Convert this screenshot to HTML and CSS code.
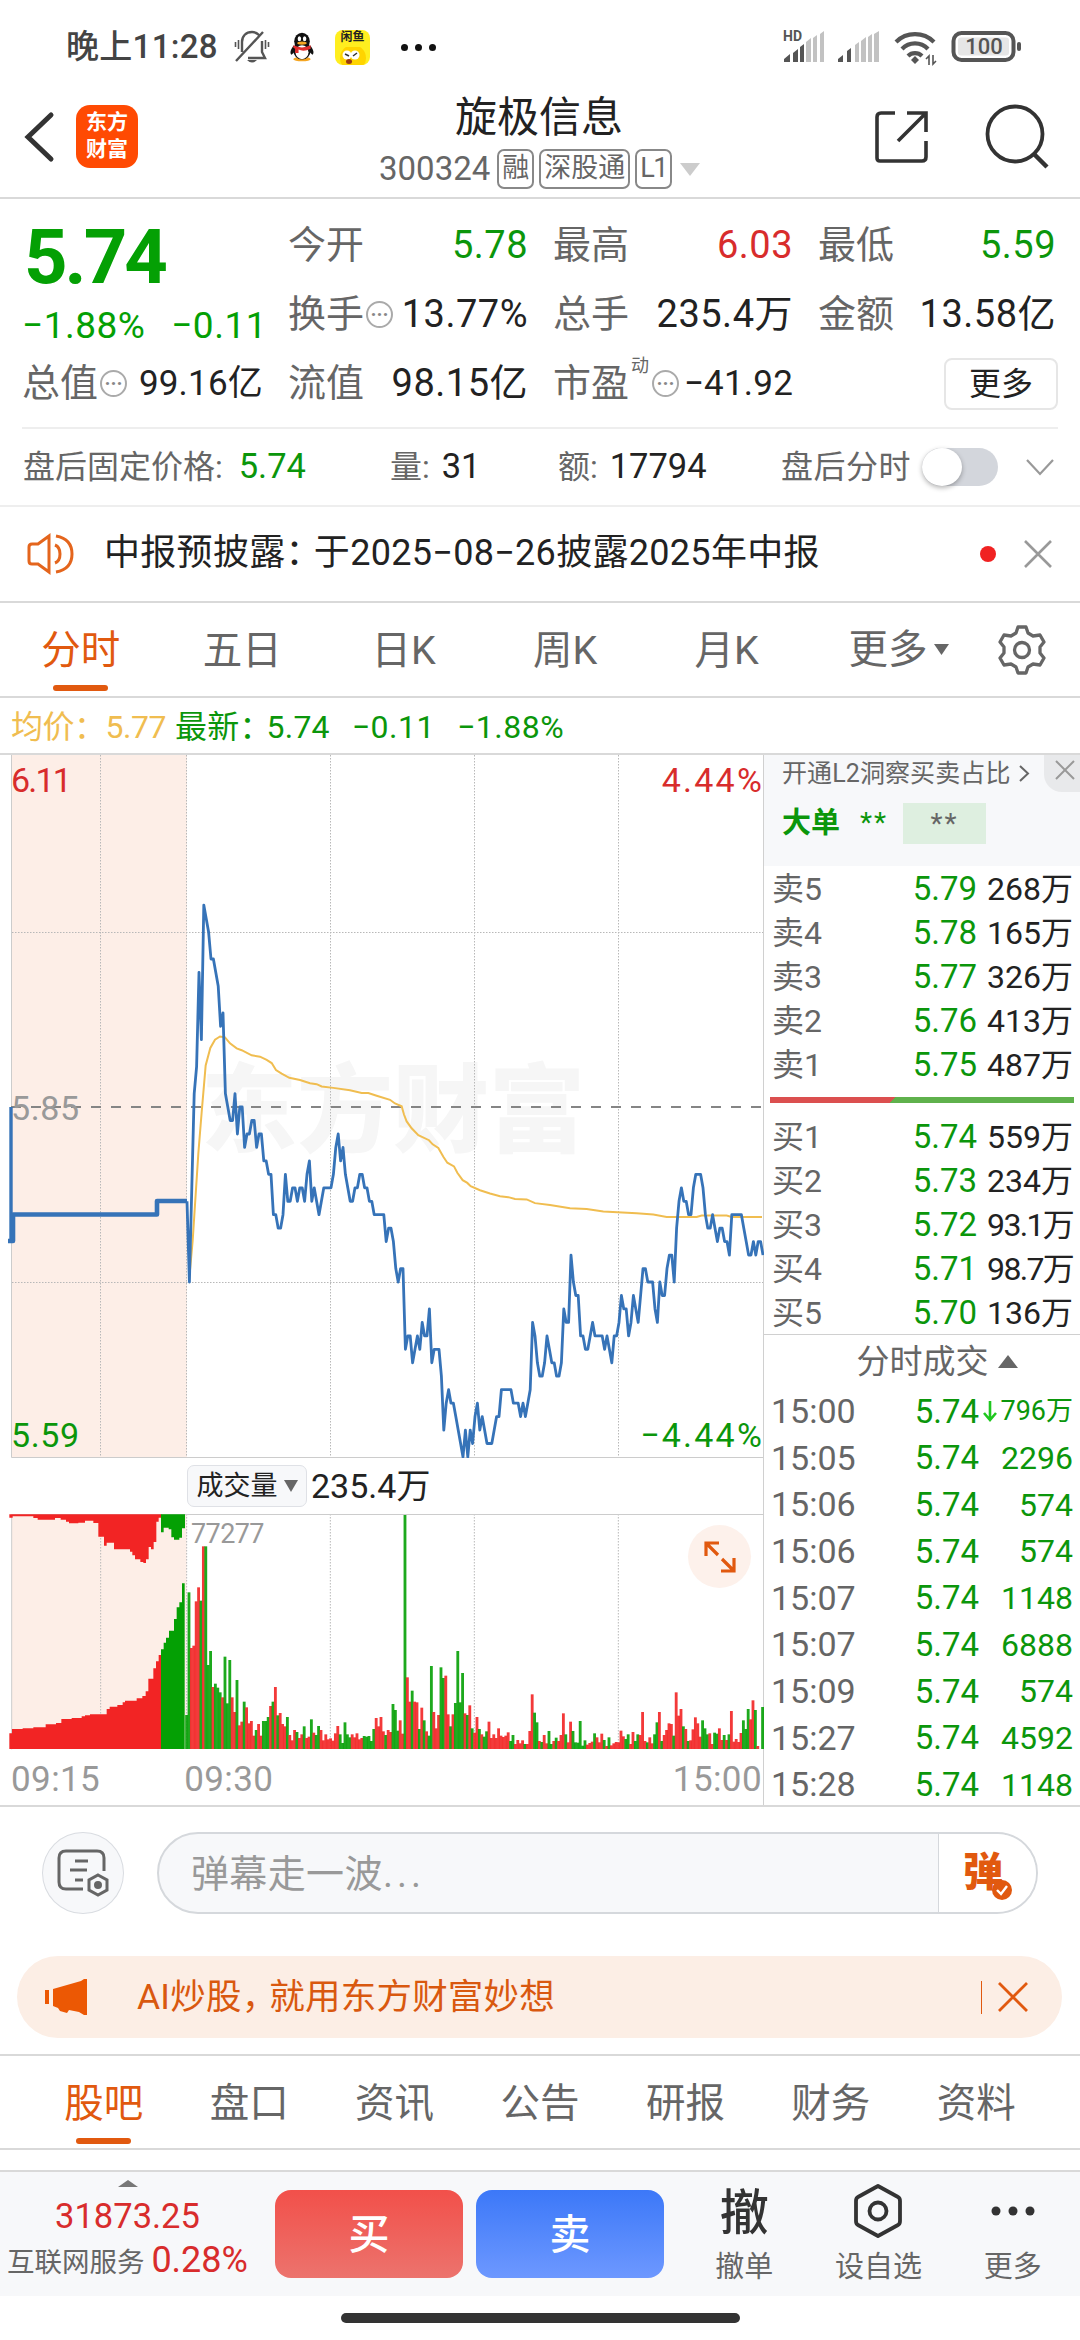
FILE: index.html
```html
<!DOCTYPE html>
<html lang="zh-CN">
<head>
    <meta charset="utf-8">
    <title>旋极信息 300324</title>
    <link rel="stylesheet" href="styles.css">
</head>
<body>
    <!-- Status bar -->
    <div class="status-bar">
        <span class="clock">晚上11:28</span>
        <svg class="bell" width="36" height="36" viewBox="0 0 36 36" fill="none" stroke="#555" stroke-width="2.400">
            <path d="M8 23V13C8 7 12 3 18 3q4 0 7 3M28 12v11l3 6H14M29 3L2 32"/>
            <path d="M13 31h10q-5 5-10 0z" fill="#555" stroke="none"/>
            <path d="M4.500 11v9M1.500 13v5M31.500 11v9M34.500 13v5" stroke-width="1.600"/>
        </svg>
        <svg class="qq" width="26" height="32" viewBox="0 0 30 34">
            <ellipse cx="15" cy="31" rx="10" ry="2.500" fill="#f5a623"/>
            <path d="M6 15C1 20 1 25 3 26l3-3zM24 15c5 5 5 10 3 11l-3-3z" fill="#111"/>
            <ellipse cx="15" cy="21" rx="10" ry="10.500" fill="#111"/>
            <ellipse cx="15" cy="10.500" rx="9" ry="10" fill="#111"/>
            <ellipse cx="15" cy="23" rx="7.500" ry="8" fill="#fff"/>
            <ellipse cx="12" cy="7.500" rx="2" ry="3" fill="#fff"/>
            <ellipse cx="18" cy="7.500" rx="2" ry="3" fill="#fff"/>
            <ellipse cx="15" cy="12.500" rx="5.500" ry="1.800" fill="#f5a623"/>
            <path d="M5 15q10 5 20 0v4q-8 4-14 1v4H7v-5l-2-1z" fill="#e02d2d"/>
        </svg>
        <span class="fish-app">
            <b>闲鱼</b>
            <svg width="34" height="18" viewBox="0 0 34 18">
                <circle cx="18" cy="11" r="13" fill="#ffd400"/>
                <circle cx="12" cy="8" r="4.500" fill="#fff"/>
                <circle cx="20" cy="8" r="4.500" fill="#fff"/>
                <path d="M10 7l4 2M22 6l-4 3" stroke="#333" stroke-width="1.500"/>
                <ellipse cx="14" cy="14.500" rx="3" ry="2.500" fill="#9b3b12"/>
            </svg>
        </span>
        <span class="dots"><i></i><i></i><i></i></span>
        <svg class="signals" width="240" height="40" viewBox="0 0 240 40">
            <g fill="#c2c2c2">
                <path d="M24 13l5-4v24h-5zM31 9l4-3v27h-4zM38 5l4-3v31h-4z"/>
                <path d="M73 16l4-3v20h-4zM79 12l5-4v25h-5zM86 8l4-3v28h-4zM92 5l5-3v31h-5z"/>
            </g>
            <g fill="#555">
                <path d="M2 33v-3l6-5v8zM11 24l5-4v13h-5zM18 18l4-3v18h-4z"/>
                <path d="M56 33v-3l5-4v7zM65 22l4-3v14h-4z"/>
                <path d="M133 27l4 4-4 4-4-4z"/>
            </g>
            <g fill="none" stroke="#555" stroke-width="4.200">
                <path d="M114 13a27 27 0 0 1 38 0M120 20a18 18 0 0 1 26 0M126 27a10 10 0 0 1 14 0"/>
                <path d="M144 30l3-3v9M154 32l-3 3v-9" stroke-width="1.600"/>
                <rect x="171.500" y="4" width="60" height="27" rx="8" stroke-width="4"/>
            </g>
            <rect x="176" y="8.500" width="51" height="18" rx="3" fill="#e6e6e6"/>
            <rect x="235" y="13" width="4" height="9" rx="2" fill="#555"/>
            <text x="1" y="12" class="hd">HD</text>
            <text x="202" y="25" class="battery" text-anchor="middle">100</text>
        </svg>
    </div>

    <!-- Title bar -->
    <div class="header">
        <svg class="back" width="34" height="54" viewBox="0 0 34 54" fill="none" stroke="#333" stroke-width="5" stroke-linecap="round"><path d="M28 5L5 27l23 22"/></svg>
        <div class="logo"><div>东方</div><div>财富</div></div>
        <div class="title">
            <h1>旋极信息</h1>
            <div class="code">
                <span>300324</span>
                <span class="tag">融</span><span class="tag">深股通</span><span class="tag">L1</span>
                <svg width="20" height="13" viewBox="0 0 20 13"><path d="M0 0h20L10 13z" fill="#ccc"/></svg>
            </div>
        </div>
        <svg class="share" width="56" height="56" viewBox="0 0 56 56" fill="none" stroke="#333" stroke-width="3.600">
            <path d="M21 4H7q-4 0-4 4v41q0 3 3 3h42q4 0 4-4V32M33 4h19v19M51 5L24 32"/>
        </svg>
        <svg class="search" width="66" height="66" viewBox="0 0 66 66" fill="none" stroke="#333" stroke-width="3.800">
            <circle cx="30" cy="30" r="27.500"/><path d="M48 49l14 14" stroke-width="4.500"/>
        </svg>
    </div>

    <!-- Quote -->
    <div class="quote">
        <div class="price-box">
            <div class="price">5.74</div>
            <div class="change"><span>−1.88%</span><span>−0.11</span></div>
        </div>
        <div class="cell"><span>今开</span><b class="green">5.78</b></div>
        <div class="cell"><span>最高</span><b class="red">6.03</b></div>
        <div class="cell"><span>最低</span><b class="green">5.59</b></div>
        <div class="cell"><span>换手<i class="info">···</i></span><b>13.77%</b></div>
        <div class="cell"><span>总手</span><b>235.4万</b></div>
        <div class="cell"><span>金额</span><b>13.58亿</b></div>
        <div class="cell"><span>总值<i class="info">···</i></span><b class="small">99.16亿</b></div>
        <div class="cell"><span>流值</span><b>98.15亿</b></div>
        <div class="cell"><span>市盈<sup>动</sup><i class="info">···</i></span><b class="small">−41.92</b></div>
        <div class="cell"><button class="more-button">更多</button></div>
    </div>

    <div class="after-hours">
        <span class="fixed">盘后固定价格: <b class="green">5.74</b></span>
        <span class="amount">量: <b>31</b></span>
        <span class="money">额: <b>17794</b></span>
        <span class="minute">盘后分时</span>
        <span class="switch"></span>
        <svg width="28" height="17" viewBox="0 0 28 17" fill="none" stroke="#999" stroke-width="2.200"><path d="M1 1l13 14L27 1"/></svg>
    </div>

    <!-- Notice -->
    <div class="notice">
        <svg width="48" height="42" viewBox="0 0 48 42" fill="none" stroke="#e4651d" stroke-width="3">
            <path d="M22 3v36l-11-8H5q-3 0-3-3V14q0-3 3-3h6zM28 12q5 2 5 9t-5 9M29 3q16 3 16 18T29 39"/>
        </svg>
        <span>中报预披露<i class="mark">：</i>于2025−08−26披露2025年中报</span>
        <i class="red-dot"></i>
        <svg width="28" height="28" viewBox="0 0 28 28" stroke="#999" stroke-width="2.600"><path d="M1 1l26 26M27 1L1 27"/></svg>
    </div>

    <!-- Period tabs -->
    <div class="tabs period-tabs">
        <span class="active">分时</span><span>五日</span><span>日K</span><span>周K</span><span>月K</span>
        <span class="more-tab">更多<svg width="15" height="11" viewBox="0 0 15 11"><path d="M0 0h15L7.500 11z" fill="#666"/></svg></span>
        <svg class="gear" width="50" height="50" viewBox="0 0 50 50" fill="none" stroke="#666" stroke-width="3.300" stroke-linejoin="round">
            <path d="M21 2h8l2 6 5 3 7-1 4 7-4 5v6l4 5-4 7-7-1-5 3-2 6h-8l-2-6-5-3-7 1-4-7 4-5v-6l-4-5 4-7 7 1 5-3z"/>
            <circle cx="25" cy="25" r="7.500"/>
        </svg>
    </div>

    <div class="legend">
        <span class="avg">均价：5.77</span><span class="last">最新<i class="mark">：</i>5.74</span><span>−0.11</span><span>−1.88%</span>
    </div>

    <!-- Chart and order book -->
    <div class="market">
        <div class="charts">
            <div class="price-chart">
                <svg width="764" height="703" viewBox="0 0 764 703" fill="none">
                    <rect x="12" y="0" width="175" height="702" fill="#fdeee7"/>
                    <text class="watermark" x="201" y="389">东方财富</text>
                    <path d="M100.500 0v702M186.500 0v702M330.500 0v702M474.500 0v702M618.500 0v702M12 177.500h751M12 527.500h751" stroke="#b8b8b8" stroke-dasharray="1.500 1.500"/>
                    <path d="M11.500 0v702.500H763" stroke="#ccc"/>
                    <path d="M11 352h752" stroke="#858585" stroke-width="2" stroke-dasharray="10 10"/>
                    <polyline transform="scale(.33333 .45914) translate(0 -12)" vector-effect="non-scaling-stroke" stroke="#f0bd50" stroke-width="2"
                        points="567,1158 578,1070 595,880 605,790 617,688 631,650 645,632 660,625 675,627 690,640 710,651 725,655 755,666 780,669 800,676 815,683 828,698 845,706 868,715 900,720 930,727 950,729 965,734 1000,737 1050,742 1085,748 1105,748 1130,754 1170,763 1185,771 1205,777 1212,795 1220,810 1235,825 1255,840 1287,851 1298,860 1315,868 1330,887 1342,900 1362,908 1372,922 1388,938 1402,944 1412,951 1440,960 1470,967 1500,973 1525,975 1545,979 1580,980 1605,988 1650,992 1710,999 1760,1001 1810,1006 1910,1010 1960,1013 2000,1018 2090,1018 2105,1015 2180,1015 2195,1018 2286,1018"/>
                    <path d="M11 352v134" stroke="#3673b8" stroke-width="3.400"/>
                    <path d="M8 486h5v-26.500h144V446h30" stroke="#3673b8" stroke-width="4.600" stroke-linejoin="round"/>
                    <polyline id="price_line" stroke="#3673b8" stroke-width="2.800" stroke-linejoin="round"/>
                </svg>
                <span class="axis top-left red">6.11</span>
                <span class="axis top-right red">4.44%</span>
                <span class="axis middle">5.85</span>
                <span class="axis bottom-left green">5.59</span>
                <span class="axis bottom-right green">−4.44%</span>
            </div>
            <div class="volume-title">
                <span class="picker">成交量<svg width="14" height="12" viewBox="0 0 14 12"><path d="M0 0h14L7 12z" fill="#666"/></svg></span>
                <span>235.4万</span>
            </div>
            <div class="volume-chart">
                <!-- three units per pixel -->
                <svg width="764" height="236" viewBox="0 192 2292 708">
                    <rect x="36" y="192" width="524" height="705" fill="#fdeee7"/>
                    <path d="M302 192v705M560 192v705M991 192v705M1423 192v705M1855 192v705" stroke="#b8b8b8" stroke-width="3" stroke-dasharray="4.500 4.500"/>
                    <path d="M35 193.500H2290M35 193v705" stroke="#ccc" stroke-width="3" fill="none"/>
                    <path fill="#f22424" d="M28 897V850H36V837H68V835H100V832H137V823H168V819H184V807H215V804H245V799H255V796H270V793H320V777H329V770H352V765H368V757H375V752H410V745H427V738H437V724H445V686H460V655H468V634H476V615H484V897z"/>
                    <path fill="#04a004" d="M483 897V598H491V578H498V563H507V542H522V507H530V472H538V457H546V400H554V897z"/>
                    <path fill="#f22424" d="M28 193V203H38V199H100V204H113V209H165V204H182V209H198V215H207V220H235V218H255V212H280V219H295V260H312V287H320V278H342V298H390V305H397V316H405V328H421V336H430V339H438V328H446V291H453V298H461V276H469V215H476V203H484V193z"/>
                    <path fill="#04a004" d="M483 193V247H491V233H506V238H514V262H522V269H538V263H546V235H555V193z"/>
                    <g id="volume_bars"></g>
                </svg>
                <span class="max-volume">77277</span>
                <span class="expand">
                    <svg width="32" height="32" viewBox="0 0 32 32" fill="none" stroke="#e1590f" stroke-width="3.200"><path d="M2 15V2h13M2 2l12 12M30 17v13H17M30 30L18 18"/></svg>
                </span>
            </div>
            <div class="times"><span>09:15</span><span>09:30</span><span>15:00</span></div>
        </div>

        <div class="book">
            <div class="level2">
                <div class="level2-title">开通L2洞察买卖占比<svg width="11" height="17" viewBox="0 0 11 17" fill="none" stroke="#666" stroke-width="2"><path d="M1 1l8 7.500L1 16"/></svg></div>
                <div class="big-order"><b>大单</b><span>**</span><em>**</em></div>
                <span class="level2-close"><svg width="20" height="20" viewBox="0 0 20 20" stroke="#999" stroke-width="2"><path d="M1 1l18 18M19 1L1 19"/></svg></span>
            </div>
            <div class="orders">
                <div><span>卖5</span><b>5.79</b><em>268万</em></div>
                <div><span>卖4</span><b>5.78</b><em>165万</em></div>
                <div><span>卖3</span><b>5.77</b><em>326万</em></div>
                <div><span>卖2</span><b>5.76</b><em>413万</em></div>
                <div><span>卖1</span><b>5.75</b><em>487万</em></div>
            </div>
            <div class="ratio"></div>
            <div class="orders">
                <div><span>买1</span><b>5.74</b><em>559万</em></div>
                <div><span>买2</span><b>5.73</b><em>234万</em></div>
                <div><span>买3</span><b>5.72</b><em class="narrow">93.1万</em></div>
                <div><span>买4</span><b>5.71</b><em class="narrow">98.7万</em></div>
                <div><span>买5</span><b>5.70</b><em>136万</em></div>
            </div>
            <div class="deals-title">分时成交<svg width="20" height="13" viewBox="0 0 20 13"><path d="M10 0l10 13H0z" fill="#666"/></svg></div>
            <div class="deals">
                <div><span>15:00</span><b>5.74</b><svg width="14" height="22" viewBox="0 0 14 22" fill="none" stroke="#1fc71f" stroke-width="2.600"><path d="M7 1v18M1 13l6 7 6-7"/></svg><em class="wan">796万</em></div>
                <div><span>15:05</span><b>5.74</b><em>2296</em></div>
                <div><span>15:06</span><b>5.74</b><em>574</em></div>
                <div><span>15:06</span><b>5.74</b><em>574</em></div>
                <div><span>15:07</span><b>5.74</b><em>1148</em></div>
                <div><span>15:07</span><b>5.74</b><em>6888</em></div>
                <div><span>15:09</span><b>5.74</b><em>574</em></div>
                <div><span>15:27</span><b>5.74</b><em>4592</em></div>
                <div><span>15:28</span><b>5.74</b><em>1148</em></div>
            </div>
        </div>
    </div>

    <!-- Comment input -->
    <div class="comment">
        <span class="comment-settings">
            <svg width="52" height="50" viewBox="0 0 52 50" fill="none" stroke="#666" stroke-width="3">
                <path d="M26 41H9q-7 0-7-7V10q0-7 7-7h31q7 0 7 7v13M18 13h13M13 22h17M18 32h8"/>
                <path d="M41 27l9 5v10l-9 5-9-5V32z"/><circle cx="41" cy="37" r="2.500" fill="#666"/>
            </svg>
        </span>
        <div class="comment-box">
            <span class="placeholder">弹幕走一波<i>...</i></span>
            <span class="barrage">弹<svg width="20" height="20" viewBox="0 0 20 20" fill="none"><circle cx="10" cy="10" r="10" fill="#e1590f"/><path d="M5 10l4 4 6-8" stroke="#fff" stroke-width="2.400"/></svg></span>
        </div>
    </div>

    <!-- Promo -->
    <div class="promo">
        <svg width="42" height="38" viewBox="0 0 42 38" fill="#ec5804"><path d="M0 12h4v14H0zM8 11L36 3l3-2h3v36h-3l-5-3-10-2-2 3-7-2-2-3-5-2z"/></svg>
        <span>AI炒股<i class="mark">，</i>就用东方财富妙想</span>
        <i class="line"></i>
        <svg width="30" height="30" viewBox="0 0 30 30" stroke="#e1590f" stroke-width="2.800"><path d="M1 1l28 28M29 1L1 29"/></svg>
    </div>

    <!-- Content tabs -->
    <div class="tabs content-tabs">
        <span class="active">股吧</span><span>盘口</span><span>资讯</span><span>公告</span><span>研报</span><span>财务</span><span>资料</span>
    </div>

    <!-- Bottom bar -->
    <div class="bottom-bar">
        <div class="index">
            <svg width="20" height="7" viewBox="0 0 20 7"><path d="M10 0l10 7H0z" fill="#777"/></svg>
            <div class="index-value">31873.25</div>
            <div class="index-name">互联网服务 <b>0.28%</b></div>
        </div>
        <button class="trade buy">买</button>
        <button class="trade sell">卖</button>
        <div class="action"><div class="action-icon text-icon">撤</div><span>撤单</span></div>
        <div class="action"><div class="action-icon"><svg width="50" height="54" viewBox="0 0 50 54" fill="none" stroke="#333" stroke-width="3.800" stroke-linejoin="round"><path d="M25 2l20 11q2 1 2 4v20q0 3-2 4L25 52 5 41q-2-1-2-4V17q0-3 2-4z"/><circle cx="25" cy="27" r="8.500"/></svg></div><span>设自选</span></div>
        <div class="action"><div class="action-icon"><svg width="44" height="10" viewBox="0 0 44 10" fill="#333"><circle cx="5" cy="5" r="4.500"/><circle cx="22" cy="5" r="4.500"/><circle cx="39" cy="5" r="4.500"/></svg></div><span>更多</span></div>
    </div>
    <div class="home-bar"></div>

    <script>
        // Minute prices from 09:30, in cents above 5.59
        var prices = [
            19,13,20,27,29,36,31,41,40,39,37,37,36,35,32,33,27,26,25,25,27,24,26,26,23,24,24,25,25,23,
            24,24,22,22,21,21,18,18,17,17,18,21,19,19,20,20,19,20,20,19,21,22,19,20,19,18,19,20,20,20,
            20,21,23,24,22,23,21,20,19,19,20,20,21,21,20,20,19,19,18,18,18,18,18,16,17,17,16,14,13,14,
            14,8,9,9,7,8,9,8,10,9,9,11,7,8,8,8,6,2,4,5,4,4,3,2,1,0,2,0,2,1,
            3,4,2,3,2,1,1,1,2,3,3,5,5,5,5,5,4,4,4,3,4,3,4,5,10,9,7,6,6,7,
            9,8,7,7,6,6,7,11,10,10,15,13,12,12,9,9,8,8,9,10,9,9,9,9,8,9,8,7,9,9,
            10,12,11,11,9,10,12,11,10,12,14,14,13,13,13,11,10,13,12,12,14,15,15,13,17,19,20,19,19,18,
            18,20,21,21,21,20,18,17,17,18,17,16,17,17,16,16,15,18,18,18,18,18,17,16,15,15,16,15,16,16,15
        ];

        // Minute volume heights, r = up, g = down
        var volumes = "102g 470g 303r 310r 443r 485r 445g 608r 608g 252g 294g 186r 196g 184g 170g 155r 277g 137g 267g 155r 111r 207g 71r 82r 142g 125r 77r 84r 40r 57g " +
            "75r 40r 84g 84g 96g 129r 142g 186r 101g 108r 75r 68r 96g 42r 26r 57r 51g 33r 44r 68g 33r 37r 89g 49r 42g 69g 57r 26r 44r 29r " +
            "32r 25r 47r 69r 44g 18g 80g 44g 35g 44r 35r 47r 29r 33r 39g 37g 39g 24g 60g 93r 68r 96r 53r 42g 57r 51r 135g 117g 55g 86r " +
            "46r 702g 215r 142r 175g 142r 140r 60g 124r 86g 53r 40g 249g 111r 62r 102r 245g 213g 220r 104r 68g 104r 138g 294g 140g 228g 107r 102g 131r 62g " +
            "49r 96r 60g 44r 37g 53g 82r 33r 44r 33r 62r 40r 36r 40r 50r 24g 42g 15r 27r 17r 26r 15g 15r 54r 164r 109g 80g 24r 21g 42r " +
            "17r 54g 15g 24r 34g 24r 42r 107r 44g 20r 82r 54g 20g 19g 84g 10g 26g 13r 18r 22r 47g 35r 20r 46r 27g 9r 35g 11r 17r 21r " +
            "20r 55r 38r 30g 44g 15r 51r 24g 44g 42r 111r 24r 20g 35r 17r 44g 80g 111r 24g 42r 57r 77r 75r 40g 170r 100r 120r 68g 60r 24g " +
            "26r 59r 95r 77r 37r 86g 62g 44g 47r 15r 49g 46g 62r 27r 42g 27r 44g 114r 22r 30r 21r 48r 86g 60g 120g 89r 146r 117g 9r 0r 126g";

        var points = prices.map(function(p, i) {
            return (187 + i * 2.4).toFixed(1) + "," + (702 - p * 13.46).toFixed(1);
        });
        document.getElementById("price_line").setAttribute("points", points.join(" "));

        var bars = "";
        volumes.split(" ").forEach(function(v, i) {
            var h = parseInt(v);
            var color = v.slice(-1) === "r" ? "#f22424" : "#04a004";
            bars += '<rect x="' + (555.5 + i * 7.2).toFixed(1) + '" y="' + (897 - h) + '" width="8.500" height="' + h + '" fill="' + color + '" fill-opacity=".9"/>';
        });
        document.getElementById("volume_bars").innerHTML = bars;
    </script>
</body>
</html>
```

FILE: styles.css
```css
* {
    box-sizing: border-box;
}

body {
    margin: 0;
    width: 1080px;
    height: 2340px;
    overflow: hidden;
    background-color: #fff;
    color: #222;
    font-family: Roboto, "Noto Sans CJK SC", sans-serif;
    font-size: 32px;
    line-height: 1.2;
    white-space: nowrap;
}

b, em, i {
    font-weight: normal;
    font-style: normal;
}

svg {
    display: block;
    flex: none;
}

button {
    font-family: inherit;
    padding: 0;
}

.green {
    color: #0b960b;
}

.red {
    color: #d82c2c;
}

/* Full-width punctuation set a little tighter */
.mark {
    margin-right: -8px;
}

/* Status bar */
.status-bar {
    height: 92px;
    padding: 2px 58px 0 66px;
    display: flex;
    align-items: center;
}

.clock {
    width: 168px;
    font-size: 33px;
    font-weight: 500;
    letter-spacing: 0.3px;
    color: #444;
}

.qq {
    margin-left: 19px;
}

.fish-app {
    margin-left: 20px;
    width: 35px;
    height: 35px;
    border-radius: 8px;
    background-color: #ffee1f;
    overflow: hidden;
}

.fish-app b {
    display: block;
    height: 17px;
    font-size: 12px;
    font-weight: 700;
    text-align: center;
}

.dots {
    display: flex;
    gap: 7px;
    margin-left: 31px;
}

.dots i {
    width: 7px;
    height: 7px;
    border-radius: 50%;
    background-color: #111;
}

.signals {
    margin-left: auto;
    margin-top: 3px;
}

.hd {
    font-size: 14px;
    font-weight: 700;
    fill: #555;
}

.battery {
    font-size: 22px;
    font-weight: 500;
    fill: #555;
}

/* Title bar */
.header {
    height: 107px;
    padding: 0 28px 16px 23px;
    display: flex;
    align-items: center;
    border-bottom: 2px solid #d9d9d9;
}

.logo {
    width: 62px;
    height: 63px;
    margin-left: 19px;
    border-radius: 14px;
    background-color: #ff4a03;
    color: #fff;
    font-size: 21px;
    font-weight: 700;
    line-height: 27px;
    padding-top: 4px;
    text-align: center;
}

.title {
    width: 320px;
    margin-left: 241px;
    padding-top: 8px;
}

.title h1 {
    margin: 0;
    font-size: 42px;
    font-weight: 400;
    text-align: center;
    line-height: 52px;
}

.code {
    display: flex;
    align-items: center;
    gap: 5px;
    margin-top: 5px;
    color: #666;
    font-size: 33px;
}

.code svg {
    margin-left: 3px;
}

.code span:first-child {
    margin-right: 2px;
}

.tag {
    height: 40px;
    padding: 0 3px;
    border: 2px solid #888;
    border-radius: 7px;
    font-size: 27px;
    line-height: 35px;
}

.tag:nth-of-type(4) {
    letter-spacing: -1.5px;
}

.share {
    margin-left: 175px;
}

.search {
    margin-left: 55px;
}

/* Quote */
.quote {
    height: 230px;
    margin: 0 22px;
    padding: 12px 0;
    display: grid;
    grid-template-columns: 241px 240px 240px 238px;
    grid-template-rows: 69px 69px 69px;
    column-gap: 25px;
    border-bottom: 2px solid #eee;
}

.price-box {
    grid-row: span 2;
    color: #04a004;
}

.price {
    height: 90px;
    padding-left: 2px;
    font-size: 76px;
    font-weight: 700;
    line-height: 92px;
    letter-spacing: -3px;
}

.change {
    display: flex;
    justify-content: space-between;
    margin-right: -4px;
    font-size: 37px;
    line-height: 50px;
    letter-spacing: 0.5px;
}

.cell {
    display: flex;
    align-items: center;
    justify-content: space-between;
    font-size: 38px;
}

.cell > span {
    display: flex;
    align-items: center;
    color: #666;
}

.cell > b {
    letter-spacing: 0.5px;
}

.cell .small {
    font-size: 35px;
    letter-spacing: 0.2px;
}

.cell sup {
    align-self: flex-start;
    font-size: 18px;
    line-height: 18px;
    margin: -4px 2px 0;
}

.info {
    width: 27px;
    height: 27px;
    margin-left: 2px;
    border: 2px solid #aaa;
    border-radius: 50%;
    color: #888;
    font-size: 20px;
    font-weight: 700;
    line-height: 23px;
    text-align: center;
}

sup + .info {
    margin-left: 1px;
}

.more-button {
    width: 114px;
    height: 52px;
    margin-left: auto;
    margin-right: -2px;
    border: 2px solid #e6e6e6;
    border-radius: 8px;
    background-color: #fff;
    color: #222;
    font-size: 32px;
    line-height: 46px;
}

/* After hours trading */
.after-hours {
    height: 78px;
    padding-left: 23px;
    display: flex;
    align-items: center;
    color: #666;
    font-size: 32px;
    border-bottom: 2px solid #eee;
}

.after-hours b {
    font-size: 34.5px;
    margin-left: 4px;
}

.after-hours b:not(.green) {
    color: #222;
}

.after-hours .green {
    margin-left: 8px;
}

.fixed {
    width: 367px;
}

.amount {
    width: 168px;
}

.money {
    width: 223px;
}

.minute {
    width: 141px;
    letter-spacing: 0.5px;
}

.switch {
    width: 76px;
    height: 38px;
    margin-right: 28px;
    border-radius: 19px;
    background-color: #d3d6dc;
}

.switch::before {
    content: "";
    display: block;
    width: 40px;
    height: 38px;
    border-radius: 50%;
    background-color: #fff;
    box-shadow: 0 2px 5px rgba(0, 0, 0, 0.3);
}

/* Notice */
.notice {
    height: 96px;
    padding: 0 28px 0 27px;
    display: flex;
    align-items: center;
    font-size: 36px;
    border-bottom: 2px solid #d9d9d9;
}

.notice span {
    margin-left: 29px;
    letter-spacing: 0.3px;
}

.red-dot {
    width: 16px;
    height: 16px;
    margin-left: auto;
    margin-right: 28px;
    border-radius: 50%;
    background-color: #f02222;
}

/* Tabs */
.tabs {
    display: flex;
    height: 95px;
    color: #666;
    font-size: 39.5px;
    border-bottom: 2px solid #d9d9d9;
}

.tabs span {
    flex: 1;
    display: flex;
    flex-direction: column;
    align-items: center;
    line-height: 96px;
}

.tabs .active {
    color: #e1590f;
}

.tabs .active::after {
    content: "";
    width: 55px;
    height: 6px;
    margin-top: -14px;
    border-radius: 3px;
    background-color: #e1590f;
}

.period-tabs span {
    flex: none;
    width: 161.5px;
}

.period-tabs .more-tab {
    flex-direction: row;
    justify-content: center;
    gap: 6px;
    width: 160px;
    padding-left: 22px;
}

.gear {
    align-self: center;
    margin-left: 29px;
}

.content-tabs {
    padding: 0 31px;
    height: 96px;
    border-top: 2px solid #d9d9d9;
}

/* Chart legend */
.legend {
    height: 57px;
    padding: 4px 0 0 11px;
    display: flex;
    align-items: center;
    gap: 22px;
    color: #0b960b;
    font-size: 32px;
    letter-spacing: 0.5px;
    border-bottom: 2px solid #d9d9d9;
}

.legend .avg {
    width: 142px;
    color: #f0bd50;
    letter-spacing: -0.5px;
}

.legend .last {
    letter-spacing: 0.2px;
}

.legend .mark {
    margin-right: -5px;
}

/* Charts */
.market {
    display: flex;
    height: 1052px;
    border-bottom: 2px solid #d9d9d9;
}

.charts {
    width: 764px;
    border-right: 1px solid #d0d0d0;
}

.price-chart, .volume-chart {
    position: relative;
}

.watermark {
    font-size: 96px;
    font-weight: 900;
    fill: #f6f6f6;
}

.axis {
    position: absolute;
    font-size: 34px;
    line-height: 40px;
}

.top-left {
    top: 5px;
    left: 11px;
    letter-spacing: -1.8px;
}

.top-right {
    top: 5px;
    right: -1px;
    letter-spacing: 2.2px;
}

.middle {
    top: 333px;
    left: 11px;
    color: #999;
    letter-spacing: 0.6px;
}

.bottom-left {
    bottom: 3px;
    left: 11px;
    letter-spacing: 0.6px;
}

.bottom-right {
    bottom: 3px;
    right: -1px;
    letter-spacing: 2.2px;
}

.volume-title {
    height: 56px;
    padding-left: 187px;
    display: flex;
    align-items: center;
    gap: 4px;
    font-size: 34px;
}

.picker {
    width: 120px;
    height: 42px;
    display: flex;
    align-items: center;
    justify-content: center;
    gap: 6px;
    border: 1px solid #dfe1e6;
    border-radius: 7px;
    background-color: #f7f8fa;
    font-size: 27px;
}

.max-volume {
    position: absolute;
    top: 4px;
    left: 191px;
    color: #999;
    font-size: 27px;
    letter-spacing: -0.6px;
}

.expand {
    position: absolute;
    top: 11px;
    right: 12px;
    width: 63px;
    height: 63px;
    display: flex;
    align-items: center;
    justify-content: center;
    border-radius: 50%;
    background-color: #fdf1eb;
}

.times {
    display: flex;
    height: 56px;
    padding: 9px 1px 0 11px;
    color: #999;
    font-size: 35px;
    letter-spacing: 0.4px;
}

.times span:nth-child(2) {
    margin-left: 84px;
}

.times span:last-child {
    margin-left: auto;
}

/* Order book */
.book {
    width: 316px;
}

.level2 {
    position: relative;
    height: 111px;
    padding-left: 18px;
    background-color: #f7f8fa;
    color: #666;
}

.level2-title {
    display: flex;
    align-items: center;
    gap: 8px;
    height: 37px;
    font-size: 25px;
    letter-spacing: 0.1px;
}

.level2-close {
    position: absolute;
    top: 0;
    right: 0;
    width: 36px;
    height: 37px;
    padding: 5px 5px 0 11px;
    border-bottom-left-radius: 18px;
    background-color: #e8e9eb;
}

.big-order {
    display: flex;
    align-items: center;
    height: 62px;
    font-size: 28px;
}

.big-order b {
    width: 78px;
    color: #0b960b;
    font-size: 29px;
    font-weight: 700;
}

.big-order span {
    width: 43px;
    color: #0b960b;
    letter-spacing: 2px;
}

.big-order em {
    width: 83px;
    height: 41px;
    background-color: #deefe0;
    text-align: center;
    line-height: 41px;
    letter-spacing: 2px;
}

.orders {
    padding: 1px 7px 0 8px;
    color: #666;
}

.orders div, .deals div {
    display: flex;
    align-items: center;
    height: 44px;
}

.orders span {
    width: 70px;
}

.orders b {
    width: 135px;
    color: #0b960b;
    font-size: 33px;
    text-align: right;
}

.orders em {
    flex: 1;
    color: #222;
    text-align: right;
}

.orders .narrow {
    letter-spacing: -1.7px;
}

.ratio {
    height: 6px;
    margin: 10px 6px 11px;
    background: linear-gradient(135deg, #db4f4f 40.5%, #5fb14c 40.5%);
}

.deals-title {
    height: 54px;
    margin-top: -1px;
    display: flex;
    align-items: center;
    justify-content: center;
    gap: 9px;
    padding-left: 30px;
    border-top: 1px solid #d0d0d0;
    color: #666;
    font-size: 33px;
}

.deals {
    padding: 0 7px;
    color: #666;
}

.deals div {
    height: 46.7px;
}

.deals span {
    width: 110px;
    font-size: 34px;
}

.deals b {
    width: 98px;
    color: #0b960b;
    font-size: 33px;
    text-align: right;
}

.deals svg {
    margin-left: 4px;
}

.deals em {
    flex: 1;
    color: #0b960b;
    font-size: 32px;
    text-align: right;
}

.deals .wan {
    font-size: 27px;
}

/* Comment input */
.comment {
    display: flex;
    padding: 25px 42px 0;
    gap: 33px;
}

.comment-settings {
    width: 82px;
    height: 82px;
    display: flex;
    align-items: center;
    justify-content: center;
    border: 1px solid #d9dce1;
    border-radius: 50%;
    background-color: #f7f8fa;
}

.comment-box {
    width: 882px;
    height: 82px;
    display: flex;
    border: 2px solid #d5d8dc;
    border-radius: 41px;
    background-color: #f7f8fa;
    overflow: hidden;
}

.placeholder {
    flex: 1;
    padding-left: 32px;
    color: #999;
    font-size: 38px;
    line-height: 80px;
    letter-spacing: 0.4px;
}

.placeholder i {
    letter-spacing: 4px;
}

.barrage {
    width: 98px;
    display: flex;
    padding-left: 24px;
    border-left: 1px solid #d5d8dc;
    background-color: #fff;
    color: #e1590f;
    font-size: 40px;
    font-weight: 900;
    line-height: 78px;
}

.barrage svg {
    margin: 46px 0 0 -11px;
}

/* Promo */
.promo {
    height: 82px;
    margin: 42px 18px 16px 17px;
    padding: 0 34px 0 28px;
    display: flex;
    align-items: center;
    border-radius: 41px;
    background-color: #fceee5;
    color: #d9580f;
    font-size: 35.5px;
}

.promo span {
    margin-left: 50px;
    letter-spacing: 0.2px;
}

.promo .line {
    width: 1px;
    height: 33px;
    margin-left: auto;
    margin-right: 16px;
    background-color: #e1590f;
}

/* Bottom bar */
.bottom-bar {
    display: flex;
    height: 126px;
    margin-top: 20px;
    border-top: 2px solid #d9d9d9;
    background-color: #f7f8fa;
}

.index {
    width: 275px;
    padding: 8px 20px 0 0;
    display: flex;
    flex-direction: column;
    align-items: center;
    color: #d82c2c;
}

.index-value {
    margin-top: 9px;
    font-size: 34.5px;
}

.index-name {
    margin-top: 2px;
    color: #666;
    font-size: 27.5px;
}

.index-name b {
    color: #d82c2c;
    font-size: 36px;
}

.trade {
    width: 188px;
    height: 88px;
    margin: 18px 13px 0 0;
    padding-bottom: 6px;
    border: none;
    border-radius: 16px;
    color: #fff;
    font-size: 41px;
    font-weight: 500;
}

.buy {
    background: linear-gradient(#f2504a, #ec736d);
}

.sell {
    background: linear-gradient(#3c78f8, #6d98ff);
}

.action {
    flex: 1;
    display: flex;
    flex-direction: column;
    align-items: center;
    color: #666;
    font-size: 29px;
}

.action-icon {
    height: 78px;
    display: flex;
    align-items: center;
    color: #333;
    font-size: 49px;
    font-weight: 500;
}

.text-icon {
    padding-top: 6px;
}

.home-bar {
    width: 399px;
    height: 10px;
    margin: 17px auto 0;
    border-radius: 5px;
    background-color: #333;
}
```
